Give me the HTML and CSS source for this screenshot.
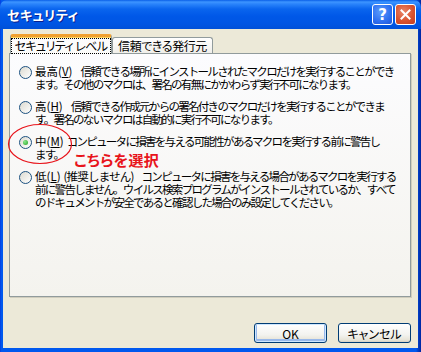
FILE: index.html
```html
<!DOCTYPE html>
<html lang="ja">

<head>
    <meta charset="UTF-8">
    <meta name="viewport" content="width=device-width, initial-scale=1.0">
    <title>セキュリティ</title>
    <link rel="stylesheet" href="styles.css">
</head>

<body>
    <div class="window">
        <div class="titlebar">
            <span class="title">セキュリティ</span>
            <div class="caption">
                <span class="cap help">?</span>
                <span class="cap close">
                    <svg width="11" height="11" viewBox="0 0 11 11">
                        <path d="M1.5 1.5 L9.5 9.5 M9.5 1.5 L1.5 9.5" stroke="#fff" stroke-width="2" stroke-linecap="square" />
                    </svg>
                </span>
            </div>
        </div>

        <div class="client">
            <div class="tabs">
                <div class="tab active"><span class="focus">セキュリティ&nbsp;レベル</span></div>
                <div class="tab">信頼できる発行元</div>
            </div>

            <div class="panel">
                <div class="option">
                    <span class="radio"></span>
                    <span class="text"><span class="key sp">最高(<u>V</u>)</span>信頼できる場所にインストールされたマクロだけを実行することができ<br>ます。その他のマクロは、署名の有無にかかわらず実行不可になります。</span>
                </div>
                <div class="option">
                    <span class="radio"></span>
                    <span class="text"><span class="key sp">高(<u>H</u>)</span>信頼できる作成元からの署名付きのマクロだけを実行することができま<br>す。署名のないマクロは自動的に実行不可になります。</span>
                </div>
                <div class="option">
                    <span class="radio checked"></span>
                    <span class="text"><span class="key sp-s">中(<u>M</u>)</span>コンピュータに損害を与える可能性があるマクロを実行する前に警告し<br>ます。</span>
                </div>
                <div class="option">
                    <span class="radio"></span>
                    <span class="text"><span class="key sp-s">低(<u>L</u>)</span><span class="aside sp">(推奨しません)</span>コンピュータに損害を与える場合があるマクロを実行する<br>前に警告しません。ウイルス検索プログラムがインストールされているか、すべて<br>のドキュメントが安全であると確認した場合のみ設定してください。</span>
                </div>

                <!-- 注記 -->
                <svg class="mark" width="66" height="42" viewBox="0 0 66 42">
                    <ellipse cx="33" cy="21" rx="31.5" ry="19.5" fill="none" stroke="#e8141b" stroke-width="1.2" />
                </svg>
                <span class="note">こちらを選択</span>
            </div>

            <div class="buttons">
                <button class="btn default">OK</button>
                <button class="btn">キャンセル</button>
            </div>
        </div>
    </div>
</body>

</html>
```

FILE: styles.css
```css
* {
    padding: 0;
    margin: 0;
    box-sizing: border-box;
}

html,
body {
    height: 100%;
    overflow: hidden;
    background-color: #ece9d8;
}

.window {
    width: 421px;
    height: 352px;
    display: flex;
    flex-direction: column;
    background: linear-gradient(to right, #0831d9 0, #0058ee 1px, #0058ee 416px, #0040c8 418px, #0025a0 421px);
    font-family: "Noto Sans CJK JP", "Liberation Sans", sans-serif;
    font-feature-settings: "palt";
}

.titlebar {
    height: 29px;
    display: flex;
    align-items: center;
    justify-content: space-between;
    padding: 0 5px 0 7px;
    border-radius: 7px 7px 0 0;
    background: linear-gradient(#0a5fe8 0, #3d95ff 2px, #2a84fb 4px, #0a65ee 9px, #0058e8 16px, #0055e3 24px, #0050d8 29px);
}

.title {
    color: #fff;
    font-size: 13px;
    font-weight: bold;
    letter-spacing: 0.5px;
    text-shadow: 1px 1px 0 #0a1e8c;
}

.caption {
    display: flex;
    gap: 2px;
}

.cap {
    width: 21px;
    height: 21px;
    border: 1px solid #fff;
    border-radius: 3px;
    display: flex;
    align-items: center;
    justify-content: center;
    color: #fff;
    font-family: "DejaVu Sans", sans-serif;
    font-weight: bold;
    font-size: 15px;
}

.help {
    background: radial-gradient(circle at 40% 35%, #5c9dfc 0, #2e6ff0 60%, #1d54d6 100%);
}

.close {
    background: radial-gradient(circle at 40% 35%, #e9866a 0, #d9532f 55%, #c43d1f 100%);
}

.client {
    flex: 1;
    margin: 0 3px 4px 3px;
    padding: 5px 7px 0 6px;
    background-color: #ece9d8;
    display: flex;
    flex-direction: column;
}

.tabs {
    display: flex;
    align-items: flex-end;
    padding-left: 1px;
    position: relative;
    z-index: 1;
    font-size: 12px;
    color: #000;
}

.tab {
    height: 16px;
    width: 101px;
    padding-top: 1px;
    text-align: center;
    font-size: 12px;
    line-height: 14px;
    letter-spacing: -0.4px;
    white-space: nowrap;
    border: 1px solid #919b9c;
    border-bottom: none;
    border-radius: 3px 3px 0 0;
    background: linear-gradient(#fff, #f0efea);
}

.tab.active {
    height: 20px;
    width: 102px;
    padding-top: 2px;
    margin-bottom: -1px;
    border-top: 3px solid #f0a030;
    background: linear-gradient(#fcfcfe, #fbfbf9);
    box-shadow: inset 0 1px 0 #ffd55d;
}

.focus {
    display: inline-block;
    padding: 0 3px;
    line-height: 14px;
    letter-spacing: -0.6px;
    outline: 1px dotted #000;
}

.panel {
    position: relative;
    height: 244px;
    padding: 11px 0 0 9px;
    border: 1px solid #919b9c;
    background: linear-gradient(#fcfcfe, #f4f3ee);
    box-shadow: 1px 1px 0 #d0cdbd;
    font-size: 12px;
    line-height: 13px;
    color: #000;
}

.option {
    display: flex;
    gap: 3px;
    margin-bottom: 9px;
}

.radio {
    flex: none;
    width: 13px;
    height: 13px;
    margin-top: 1px;
    border: 1px solid #1c5180;
    border-radius: 50%;
    background: linear-gradient(135deg, #dcdad0, #fff);
    display: flex;
    align-items: center;
    justify-content: center;
}

.radio.checked::after {
    content: "";
    width: 5px;
    height: 5px;
    border-radius: 50%;
    background: radial-gradient(circle at 35% 35%, #8be88b, #21a121);
}

.text {
    font-size: 11.5px;
    font-feature-settings: normal;
    letter-spacing: -1.7px;
    white-space: nowrap;
}

.text .key {
    letter-spacing: 0;
}

.text .aside {
    letter-spacing: -0.8px;
}

.text .sp {
    margin-right: 8px;
}

.text .sp-s {
    margin-right: 3px;
}

.text u {
    text-underline-offset: 1px;
}

.mark {
    position: absolute;
    left: -3px;
    top: 69px;
}

.note {
    position: absolute;
    left: 64px;
    top: 96px;
    color: #e8141b;
    font-size: 15px;
    font-weight: bold;
    line-height: 20px;
    letter-spacing: 0.3px;
}

.buttons {
    display: flex;
    justify-content: flex-end;
    gap: 11px;
    margin-top: 26px;
}

.btn {
    width: 73px;
    height: 20px;
    border: 1px solid #003c74;
    border-radius: 3px;
    background: linear-gradient(#fff 0, #f3f3ef 60%, #e6e3d6 90%, #d6d0c5 100%);
    font-family: "Noto Sans CJK JP", "Liberation Sans", sans-serif;
    font-feature-settings: "palt";
    font-size: 12px;
    color: #000;
}

.btn.default {
    box-shadow: inset 0 0 0 1px #cee7ff, inset 0 -1px 0 2px #98b8ea;
}
```
